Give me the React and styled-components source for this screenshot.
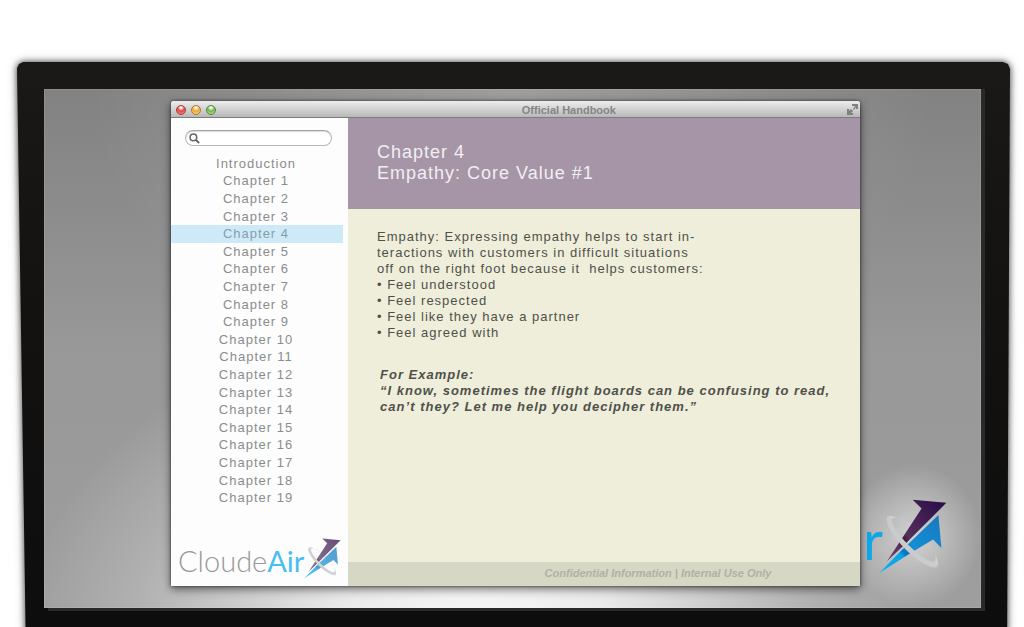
import React from "react";
import styled, { createGlobalStyle } from "styled-components";

const sans = `"Liberation Sans", Arial, sans-serif`;

const GlobalStyle = createGlobalStyle`
  *, *::before, *::after { box-sizing: border-box; }
  body { margin: 0; background: #fff; font-family: ${sans}; }
  h1, p, ul { margin: 0; padding: 0; }
  ul { list-style: none; }
`;

const Page = styled.div`
  display: flex;
  flex-direction: column;
  min-height: 100vh;
  padding: 62px 14px 0 17px;
  overflow: hidden;
`;

const Monitor = styled.div`
  position: relative;
  isolation: isolate;
  flex: 1;
  display: flex;
  flex-direction: column;
  padding: 27px 29px 19px 27px;
`;

const BezelShadow = styled.div`
  position: absolute;
  inset: 0;
  z-index: -1;
  filter: drop-shadow(0 0 3px rgba(0, 0, 0, 0.6)) drop-shadow(0 0 4px rgba(0, 0, 0, 0.3));
`;

const Bezel = styled.div`
  height: calc(100% + 30px);
  background: linear-gradient(#1b1918, #131211 40%, #0e0d0d);
  clip-path: polygon(
    0 6px, 2px 2px, 6px 0,
    calc(100% - 7px) 0, calc(100% - 2px) 2px, 100% 7px,
    calc(100% - 3px) 100%, 9px 100%
  );
`;

const Screen = styled.div`
  position: relative;
  flex: 1;
  display: grid;
  grid-template-columns: 127fr 689fr 121fr;
  padding: 12px 0 22px;
  background:
    radial-gradient(ellipse 48% 60% at 46% 104%, rgba(255, 255, 255, 0.92), rgba(255, 255, 255, 0.78) 30%, rgba(255, 255, 255, 0.2) 75%, rgba(255, 255, 255, 0)),
    radial-gradient(ellipse 45% 60% at 50% 0, rgba(255, 255, 255, 0.22), rgba(255, 255, 255, 0)),
    linear-gradient(#828282, #989898 50%, #9e9e9e);
  box-shadow: 4px 0 0 #292929, 4px 3px 0 #2b2a29, inset 0 0 0 1px rgba(255, 255, 255, 0.1);
`;

const Wallpaper = styled.div`
  position: absolute;
  right: 0;
  bottom: 0;
  display: flex;
  align-items: flex-end;
  padding: 34px;
  background: radial-gradient(closest-side at 56% 50%, rgba(255, 255, 255, 0.55), rgba(255, 255, 255, 0.25) 55%, rgba(255, 255, 255, 0));
`;

const WallpaperLetter = styled.span`
  margin-right: -4px;
  font: 400 54px/68px Lato, sans-serif;
  color: #0aa8ec;
`;

const Window = styled.main`
  position: relative;
  grid-column: 2;
  display: flex;
  flex-direction: column;
  min-width: 0;
  background: #fdfdfd;
  border-radius: 3px 3px 0 0;
  box-shadow: 0 3px 10px rgba(0, 0, 0, 0.55), 0 0 3px rgba(0, 0, 0, 0.6);
`;

const TitleBar = styled.header`
  display: grid;
  grid-template-columns: 10fr auto 7fr;
  align-items: center;
  height: 17px;
  padding: 1px 2px 0 5px;
  background: linear-gradient(#ededed, #d3d3d3 50%, #b8b8b8);
  border-bottom: 1px solid #7d7d7d;
  border-radius: 3px 3px 0 0;
`;

const Lights = styled.div`
  display: flex;
  gap: 5px;
`;

const Light = styled.button`
  width: 10px;
  height: 10px;
  padding: 0;
  border: 1px solid ${(p) => p.$edge};
  border-radius: 50%;
  background: radial-gradient(circle at 50% 20%, #fff 0 8%, ${(p) => p.$color} 45%, ${(p) => p.$glow} 100%);
`;

const WindowTitle = styled.span`
  font: bold 11px/14px ${sans};
  color: #858585;
`;

const ExpandButton = styled.button`
  justify-self: end;
  width: 11px;
  height: 11px;
  padding: 0;
  border: 0;
  background: none;
  svg { display: block; }
`;

const Body = styled.div`
  flex: 1;
  display: grid;
  grid-template-columns: 177px 1fr;
`;

const Sidebar = styled.aside`
  display: flex;
  flex-direction: column;
  padding: 12px 5px 7px 0;
`;

const SearchBox = styled.label`
  display: flex;
  align-items: center;
  height: 16px;
  margin: 0 11px 0 14px;
  padding: 0 6px 0 3px;
  gap: 3px;
  background: #fff;
  border: 1px solid #b9b9b9;
  border-top-color: #a5a5a5;
  border-radius: 8px;
  box-shadow: inset 0 1px 1px rgba(0, 0, 0, 0.15);
`;

const SearchInput = styled.input`
  flex: 1;
  min-width: 0;
  height: 12px;
  padding: 0;
  border: 0;
  outline: 0;
  background: transparent;
  font: 10px/12px ${sans};
`;

const ChapterList = styled.ul`
  display: grid;
  grid-auto-rows: 1fr;
  height: 352px;
  margin-top: 9px;
`;

const ChapterLink = styled.a`
  display: flex;
  align-items: center;
  justify-content: center;
  height: 100%;
  padding-right: 2px;
  font-size: 13px;
  line-height: 16px;
  letter-spacing: 1px;
  text-decoration: none;
  color: ${(p) => (p.$active ? "#879dab" : "#8c8c8c")};
  background: ${(p) => (p.$active ? "#ceeaf8" : "transparent")};
`;

const Brand = styled.div`
  display: flex;
  align-items: flex-end;
  margin-top: auto;
  padding-left: 7px;
`;

const BrandName = styled.span`
  font: 300 29px/36px Lato, sans-serif;
  color: #999;
`;

const BrandAccent = styled.span`
  font-weight: 400;
  color: #48c0ef;
`;

const Article = styled.article`
  display: flex;
  flex-direction: column;
  background: #eeeedb;
`;

const ArticleHeader = styled.header`
  height: 91px;
  padding: 24px 29px;
  background: #a595a7;
`;

const ArticleTitle = styled.h1`
  font-size: 18px;
  font-weight: 400;
  line-height: 21px;
  letter-spacing: 1px;
  color: #f2eff3;
`;

const Copy = styled.div`
  flex: 1;
  padding: 20px 20px 20px 29px;
  font-size: 13px;
  line-height: 16px;
  letter-spacing: 1px;
  color: #50504a;
`;

const Example = styled.p`
  margin-top: 26px;
  padding-left: 3px;
  font-weight: bold;
  font-style: italic;
`;

const Confidential = styled.footer`
  height: 24px;
  padding-left: 108px;
  text-align: center;
  font: italic bold 11px/23px ${sans};
  color: #b0b1a3;
  background: #d6d7c5;
`;

const chapters = ["Introduction", ...Array.from({ length: 19 }, (_, i) => `Chapter ${i + 1}`)];

function Mark({ width, height, soft }) {
  return (
    <svg width={width} height={height} viewBox="54 58 206 226" opacity={soft ? 0.72 : 1} aria-hidden="true">
      <defs>
        <linearGradient id="plum" x1="0" y1="1" x2="1" y2="0">
          <stop offset="0" stopColor="#6a4c6f" />
          <stop offset="0.24" stopColor="#54305c" />
          <stop offset="0.3" stopColor="#2b1a30" />
          <stop offset="0.38" stopColor="#54305c" />
          <stop offset="1" stopColor="#290a48" />
        </linearGradient>
        <linearGradient id="sky" x1="0" y1="1" x2="1" y2="0">
          <stop offset="0" stopColor="#06b4f4" />
          <stop offset="0.33" stopColor="#0aa0e6" />
          <stop offset="0.38" stopColor="#0873c3" />
          <stop offset="0.5" stopColor="#148fd4" />
          <stop offset="1" stopColor="#1877bd" />
        </linearGradient>
      </defs>
      <path d="M79 111A108 36 45 0 1 231 263L223 245A90 27 45 0 0 95 117Z" fill={soft ? "#bfc1c3" : "#cfd1d2"} />
      <path d="M258 69L156 60L183 86L124 176L78 246L128 199Z" fill="url(#plum)" />
      <path d="M234 106L243 206L218 180L150 221L54 282L118 217Z" fill="url(#sky)" />
      <path d="M79 111A108 34 45 0 0 231 263L223 245A90 22 45 0 1 95 117Z" fill={soft ? "#bfc1c3" : "#c9cbcd"} />
    </svg>
  );
}

export default function App() {
  return (
    <>
      <GlobalStyle />
      <Page>
        <Monitor>
          <BezelShadow><Bezel /></BezelShadow>
          <Screen>
            <Wallpaper>
              <WallpaperLetter>r</WallpaperLetter>
              <Mark width={68} height={75} />
            </Wallpaper>
            <Window>
              <TitleBar>
                <Lights>
                  <Light aria-label="Close" $color="#e8433f" $glow="#ff9a90" $edge="#a33c38" />
                  <Light aria-label="Minimize" $color="#eea52f" $glow="#ffe48a" $edge="#a9782f" />
                  <Light aria-label="Zoom" $color="#6fb64b" $glow="#c4f09a" $edge="#55863b" />
                </Lights>
                <WindowTitle>Official Handbook</WindowTitle>
                <ExpandButton aria-label="Full screen">
                  <svg width="11" height="11" viewBox="0 0 11 11" fill="#808080">
                    <path d="M5 0H11V5H9V3L7 6L6 5L8 2H5ZM0 5H2V7L4 5L6 7L4 9H6V11H0Z" />
                  </svg>
                </ExpandButton>
              </TitleBar>
              <Body>
                <Sidebar>
                  <SearchBox>
                    <svg width="11" height="11" viewBox="0 0 10 10" fill="none" stroke="#666" aria-hidden="true">
                      <circle cx="4" cy="4" r="3" strokeWidth="1.4" />
                      <path d="M6.2 6.2L9.2 9.2" strokeWidth="1.8" />
                    </svg>
                    <SearchInput type="search" aria-label="Search handbook" />
                  </SearchBox>
                  <nav aria-label="Chapters">
                    <ChapterList>
                      {chapters.map((name) => (
                        <li key={name}>
                          <ChapterLink href="#" $active={name === "Chapter 4"}>{name}</ChapterLink>
                        </li>
                      ))}
                    </ChapterList>
                  </nav>
                  <Brand>
                    <BrandName>Cloude<BrandAccent>Air</BrandAccent></BrandName>
                    <Mark width={37} height={41} soft />
                  </Brand>
                </Sidebar>
                <Article>
                  <ArticleHeader>
                    <ArticleTitle>Chapter 4<br />Empathy: Core Value #1</ArticleTitle>
                  </ArticleHeader>
                  <Copy>
                    <p>
                      Empathy: Expressing empathy helps to start in-<br />
                      teractions with customers in difficult situations<br />
                      off on the right foot because it&nbsp; helps customers:
                    </p>
                    <ul>
                      <li>• Feel understood</li>
                      <li>• Feel respected</li>
                      <li>• Feel like they have a partner</li>
                      <li>• Feel agreed with</li>
                    </ul>
                    <Example>
                      For Example:<br />
                      “I know, sometimes the flight boards can be confusing to read,<br />
                      can’t they? Let me help you decipher them.”
                    </Example>
                  </Copy>
                  <Confidential>Confidential Information | Internal Use Only</Confidential>
                </Article>
              </Body>
            </Window>
          </Screen>
        </Monitor>
      </Page>
    </>
  );
}
